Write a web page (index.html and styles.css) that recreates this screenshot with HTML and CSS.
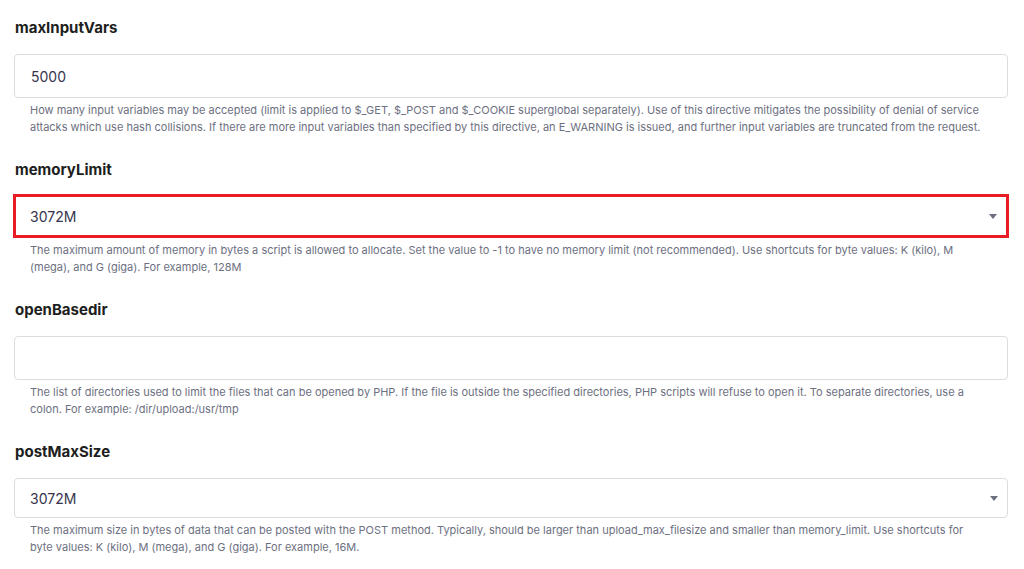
FILE: index.html
```html
<!DOCTYPE html>
<html>
<head>
  <title>PHP Options</title>
  <link rel="stylesheet" href="styles.css">
</head>
<body>
  <div class="settings">
    <div class="field">
      <label class="field-label" for="maxInputVars">maxInputVars</label>
      <input class="field-input" type="text" id="maxInputVars" value="5000">
      <p class="field-help">How many input variables may be accepted (limit is applied to $_GET, $_POST and $_COOKIE superglobal separately). Use of this directive mitigates the possibility of denial of service attacks which use hash collisions. If there are more input variables than specified by this directive, an E_WARNING is issued, and further input variables are truncated from the request.</p>
    </div>

    <div class="field">
      <label class="field-label" for="memoryLimit">memoryLimit</label>
      <div class="field-select highlighted">
        <span class="select-value">3072M</span>
        <span class="select-arrow"></span>
      </div>
      <p class="field-help">The maximum amount of memory in bytes a script is allowed to allocate. Set the value to -1 to have no memory limit (not recommended). Use shortcuts for byte values: K (kilo), M (mega), and G (giga). For example, 128M</p>
    </div>

    <div class="field">
      <label class="field-label" for="openBasedir">openBasedir</label>
      <input class="field-input" type="text" id="openBasedir" value="">
      <p class="field-help">The list of directories used to limit the files that can be opened by PHP. If the file is outside the specified directories, PHP scripts will refuse to open it. To separate directories, use a colon. For example: /dir/upload:/usr/tmp</p>
    </div>

    <div class="field">
      <label class="field-label" for="postMaxSize">postMaxSize</label>
      <div class="field-select">
        <span class="select-value">3072M</span>
        <span class="select-arrow"></span>
      </div>
      <p class="field-help">The maximum size in bytes of data that can be posted with the POST method. Typically, should be larger than upload_max_filesize and smaller than memory_limit. Use shortcuts for byte values: K (kilo), M (mega), and G (giga). For example, 16M.</p>
    </div>
  </div>
</body>
</html>
```

FILE: styles.css
```css
body {
  margin: 0;
  background-color: #fff;
  font-family: "Inter", "DejaVu Sans", sans-serif;
  color: #1d1e20;
}

.settings {
  padding: 18px 16px 0 14px;
}

.field {
  margin-bottom: 24px;
}

.field-label {
  display: block;
  margin-left: 1px;
  font-size: 15px;
  font-weight: 700;
  line-height: 20px;
  color: #1d1e20;
}

.field-input,
.field-select {
  box-sizing: border-box;
  display: flex;
  align-items: center;
  width: 100%;
  margin-top: 16px;
  padding: 0 16px;
  border: 1px solid #dadce0;
  border-radius: 4px;
  background: #fff;
  font-family: inherit;
  font-size: 14px;
  color: #36344d;
}

.field-input {
  height: 44px;
}

.field-select {
  height: 40px;
  justify-content: space-between;
  padding-left: 15px;
}

/* red marker around the edited option */
.highlighted {
  width: calc(100% + 2px);
  height: 44px;
  margin: 14px -1px 0;
  padding-left: 14px;
  border: 3px solid #e81c24;
  border-radius: 0;
}

.select-arrow {
  width: 0;
  height: 0;
  margin-right: -7px;
  border-left: 4px solid transparent;
  border-right: 4px solid transparent;
  border-top: 5px solid #6d7081;
}

.field-help {
  margin: 4px 0 0;
  padding: 0 26px 0 16px;
  font-size: 11px;
  line-height: 17px;
  color: #6d7081;
}
```
